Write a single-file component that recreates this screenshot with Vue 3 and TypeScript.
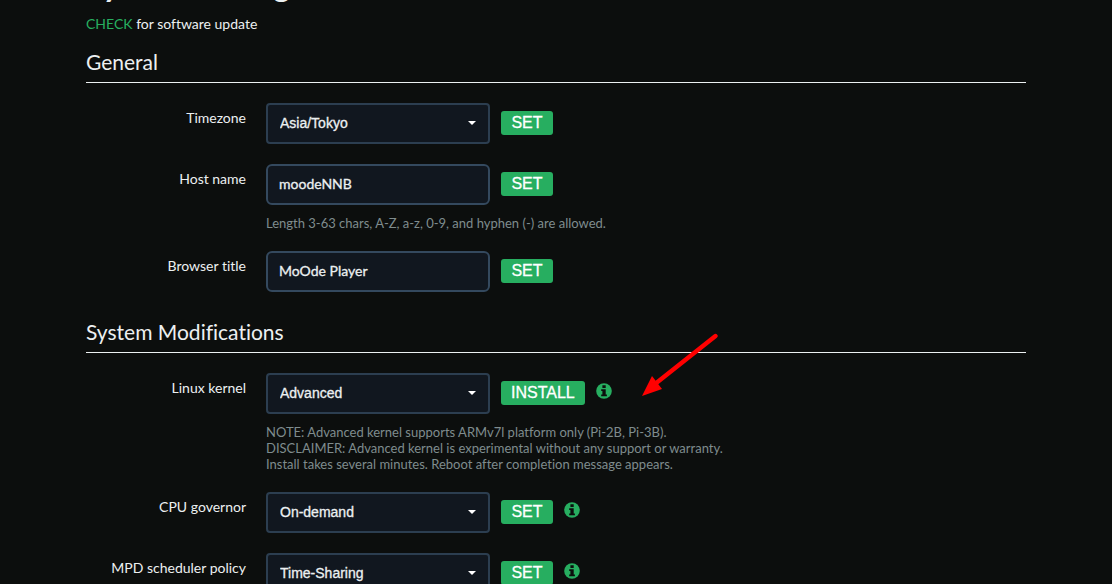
<script setup lang="ts">
import { ref } from 'vue'

interface Field {
  id: string
  label: string
  kind: 'select' | 'text'
  value: string
  action: string
  info?: boolean
  help?: string[]
}

interface Section {
  title: string
  fields: Field[]
}

const sections = ref<Section[]>([
  {
    title: 'General',
    fields: [
      { id: 'timezone', label: 'Timezone', kind: 'select', value: 'Asia/Tokyo', action: 'SET' },
      {
        id: 'hostname',
        label: 'Host name',
        kind: 'text',
        value: 'moodeNNB',
        action: 'SET',
        help: ['Length 3-63 chars, A-Z, a-z, 0-9, and hyphen (-) are allowed.'],
      },
      { id: 'browser-title', label: 'Browser title', kind: 'text', value: 'MoOde Player', action: 'SET' },
    ],
  },
  {
    title: 'System Modifications',
    fields: [
      {
        id: 'kernel',
        label: 'Linux kernel',
        kind: 'select',
        value: 'Advanced',
        action: 'INSTALL',
        info: true,
        help: [
          'NOTE: Advanced kernel supports ARMv7l platform only (Pi-2B, Pi-3B).',
          'DISCLAIMER: Advanced kernel is experimental without any support or warranty.',
          'Install takes several minutes. Reboot after completion message appears.',
        ],
      },
      { id: 'governor', label: 'CPU governor', kind: 'select', value: 'On-demand', action: 'SET', info: true },
      { id: 'scheduler', label: 'MPD scheduler policy', kind: 'select', value: 'Time-Sharing', action: 'SET', info: true },
    ],
  },
])
</script>

<template>
  <div class="viewport">
    <main class="container">
      <h1>System Configuration</h1>
      <p class="update"><a href="#check">CHECK</a> for software update</p>
      <form @submit.prevent>
        <section v-for="section in sections" :key="section.title">
          <h2>{{ section.title }}</h2>
          <div v-for="field in section.fields" :key="field.id" class="row">
            <label :for="field.id">{{ field.label }}</label>
            <div class="body">
              <div class="controls">
                <div v-if="field.kind === 'select'" class="select">
                  <select :id="field.id" class="control">
                    <option>{{ field.value }}</option>
                  </select>
                  <span class="caret"></span>
                </div>
                <input v-else :id="field.id" v-model="field.value" class="control" type="text" />
                <button type="button" class="action">{{ field.action }}</button>
                <button v-if="field.info" type="button" class="info" :aria-label="`About ${field.label}`">
                  <svg viewBox="0 0 16 16" width="16" height="16">
                    <circle cx="8" cy="8" r="7.8" fill="#27ae60" />
                    <path d="M6.4 2.3H9.7V5H6.4ZM5.2 6.2H9.7V11.4H10.9V13.2H5.2V11.4H6.4V8H5.2Z" fill="#0c0e0d" />
                  </svg>
                </button>
                <svg v-if="field.id === 'kernel'" class="arrow" viewBox="0 0 78 64" width="78" height="64">
                  <path d="M74.5 3L14 51" stroke="#f00" stroke-width="4.4" stroke-linecap="round" fill="none" />
                  <path d="M1 63L11 43L21 56Z" fill="#f00" />
                </svg>
              </div>
              <p v-if="field.help" class="help">
                <span v-for="line in field.help" :key="line">{{ line }}</span>
              </p>
            </div>
          </div>
        </section>
      </form>
    </main>
  </div>
</template>

<style>
body {
  margin: 0;
  background: #0c0e0d;
}
</style>

<style scoped>
.viewport {
  height: 100vh;
  overflow: hidden;
  background: #0c0e0d;
  color: #ecf0f1;
  font: 14px/20px Lato, sans-serif;
  font-variant-ligatures: none;
}

.container {
  max-width: 940px;
  margin: 0 auto;
}

h1 {
  margin: -35px 0 9px;
  font-size: 32px;
  line-height: 40px;
  font-weight: 700;
}

.update {
  margin: 0 0 8px;
}

a {
  color: #27ae60;
  text-decoration: none;
}

h2 {
  margin: 0 0 20px;
  border-bottom: 1px solid #ecf0f1;
  font-size: 21px;
  line-height: 40px;
  font-weight: 400;
}

.row {
  display: flex;
  gap: 20px;
  margin-bottom: 20px;
}

label {
  flex: 0 0 160px;
  padding-top: 5px;
  text-align: right;
}

.body {
  flex: 1;
}

.controls {
  position: relative;
  display: flex;
  align-items: center;
  gap: 11px;
}

.select {
  position: relative;
  display: flex;
}

.control {
  appearance: none;
  box-sizing: border-box;
  width: 224px;
  height: 41px;
  margin: 0;
  padding: 0 11px 2px;
  border: 2px solid #34495e;
  border-radius: 6px;
  outline: 0;
  background: #11171f;
  color: #ecf0f1;
  font: 14px/20px Lato, sans-serif;
  -webkit-text-stroke: 0.3px;
}

select.control {
  padding: 0 12px 2px;
  border-color: #2c3e50;
  border-radius: 4px;
  font-family: "Liberation Sans", Arial, sans-serif;
}

.caret {
  position: absolute;
  top: 18px;
  right: 14px;
  border: 4px solid transparent;
  border-top-color: #fff;
  border-bottom: 0;
}

.action {
  min-width: 52px;
  height: 24px;
  margin: 0 0 1px;
  padding: 0 10px;
  border: 0;
  border-radius: 3px;
  background: #27ae60;
  color: #fff;
  font: 16px/24px "Liberation Sans", Arial, sans-serif;
  -webkit-text-stroke: 0.3px;
}

.info {
  display: flex;
  padding: 0;
  margin: 0 0 6px;
  border: 0;
  background: none;
}

.arrow {
  position: absolute;
  left: 375px;
  top: -40px;
}

.help {
  display: flex;
  flex-direction: column;
  margin: 10px 0 0;
  color: #7f8c8d;
  font-size: 13px;
  line-height: 16px;
}
</style>
